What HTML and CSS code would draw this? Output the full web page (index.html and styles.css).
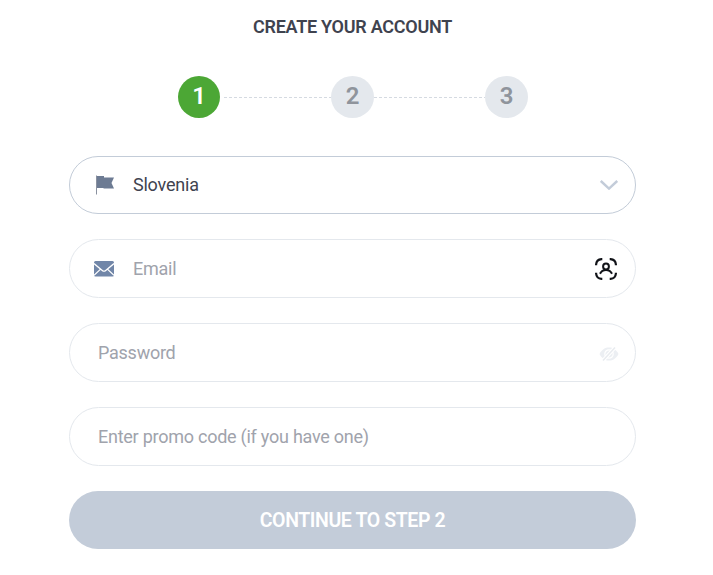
FILE: index.html
```
<!DOCTYPE html>
<html lang="en">
<head>
  <meta charset="UTF-8" />
  <meta name="viewport" content="width=device-width, initial-scale=1.0"/>
  <title>Create your account</title>
  <link rel="stylesheet" href="styles.css">
</head>
<body>

  <div class="signup">
    <h1>CREATE YOUR ACCOUNT</h1>

    <div class="steps">
      <div class="step active">1</div>
      <div class="line first"></div>
      <div class="step">2</div>
      <div class="line"></div>
      <div class="step">3</div>
    </div>

    <form>
      <div class="field country">
        <svg class="icon" width="20" height="20" viewBox="0 0 20 20">
          <path d="M2.5 0.500v19" stroke="#8a919f" fill="none"/>
          <path d="M3 1h7v1.500h10L17.500 8l2.500 5.500H9.5V13H3z" fill="#6d7b93"/>
        </svg>
        <span class="value">Slovenia</span>
        <svg class="chevron" width="18" height="10" viewBox="0 0 18 10">
          <path d="M.8 1l8.200 7.600L17.200 1" fill="none" stroke="#c3ccd9" stroke-width="2.400"/>
        </svg>
      </div>

      <div class="field">
        <svg class="icon" width="20" height="16" viewBox="0 0 20 16">
          <rect width="20" height="15.5" rx="1.5" fill="#7186a8"/>
          <path d="M0 2.600l8.300 6.800q1.700 1.400 3.400 0L20 2.600M0 14.300l6.600-6.200M20 14.300l-6.600-6.200" fill="none" stroke="#fff" stroke-width="1.3"/>
        </svg>
        <input type="email" placeholder="Email" />
        <svg class="autofill" width="22" height="22" viewBox="0 0 22 22" fill="none" stroke="#111318" stroke-width="2.200">
          <path d="M1.100 7.300V6.500Q1.500 1.500 6.500 1.100H7.300M14.700 1.100h.8q5 .4 5.400 5.400v.8M20.900 14.700v.8q-.4 5-5.400 5.400h-.8M7.300 20.900h-.8q-5-.4-5.400-5.400v-.8"/>
          <circle cx="11" cy="8.500" r="2.900" stroke-width="2"/>
          <path d="M5 15.800C6.300 13.200 8.300 12 11 12s4.700 1.200 6 3.800" stroke-width="2"/>
        </svg>
      </div>

      <div class="field plain">
        <input type="password" placeholder="Password" />
        <svg class="eye" width="20" height="16" viewBox="0 0 20 16">
          <path d="M.5 8C3 3.300 6 1.500 10 1.500S17 3.300 19.500 8C17 12.700 14 14.500 10 14.500S3 12.700.5 8z" fill="#eceff3"/>
          <circle cx="10" cy="8" r="4.200" fill="none" stroke="#fff" stroke-width="1.200"/>
          <path d="M4 14.500L16 1.500" stroke="#fff" stroke-width="3.600"/>
          <path d="M4 14.500L16 1.500" stroke="#e8ebef" stroke-width="1.500"/>
        </svg>
      </div>

      <div class="field plain">
        <input type="text" placeholder="Enter promo code (if you have one)" />
      </div>

      <button type="button">CONTINUE TO STEP 2</button>
    </form>
  </div>

</body>
</html>
```
FILE: styles.css
```
* {
  box-sizing: border-box;
}

body {
  margin: 0;
  background-color: #fff;
  font-family: Roboto, sans-serif;
  color: #3f434f;
}

.signup {
  width: 567px;
  margin-left: 69px;
  padding-top: 16px;
}

h1 {
  margin: 0;
  font-size: 18px;
  line-height: 22px;
  font-weight: 600;
  letter-spacing: -0.27px;
  text-align: center;
}

/* Steps */
.steps {
  display: flex;
  align-items: center;
  width: 350px;
  margin: 38px auto;
}

.step {
  width: 43px;
  height: 42px;
  padding-left: 1px;
  border-radius: 50%;
  background-color: #e4e8ed;
  color: #8f949c;
  font-size: 24px;
  line-height: 40px;
  font-weight: 600;
  text-align: center;
}

.step.active {
  width: 42px;
  background-color: #4ca735;
  color: #fff;
}

.line {
  flex: 1;
  height: 1px;
  margin-top: 1px;
  background: repeating-linear-gradient(to right, #d5dae1 0 3px, transparent 3px 5px);
}

.line.first {
  margin-left: 4px;
  flex: 0 0 107px;
}

/* Form */
form {
  display: flex;
  flex-direction: column;
  gap: 25px;
}

.field {
  display: flex;
  align-items: center;
  height: 59px;
  padding: 0 17px 0 24px;
  border: 1px solid #e4e8ed;
  border-radius: 30px;
  font-size: 18px;
}

.field.country {
  height: 58px;
  border-color: #c3ccd8;
}

.field.plain {
  padding-left: 28px;
  padding-right: 16px;
}

.icon {
  margin-right: 19px;
}

.value {
  flex: 1;
  padding-bottom: 2px;
  letter-spacing: -0.22px;
}

input {
  flex: 1;
  min-width: 0;
  padding: 0;
  border: none;
  outline: none;
  background: none;
  font: inherit;
  letter-spacing: -0.25px;
  color: #3f434f;
}

input::placeholder {
  color: #a0a3ac;
}

.autofill {
  margin-right: 1px;
}

.eye {
  margin-top: 2px;
}

button {
  height: 58px;
  padding: 0;
  border: none;
  border-radius: 29px;
  background-color: #c3ccd9;
  color: #fff;
  font-family: inherit;
  font-size: 19.5px;
  font-weight: 600;
  letter-spacing: -0.4px;
}
```
